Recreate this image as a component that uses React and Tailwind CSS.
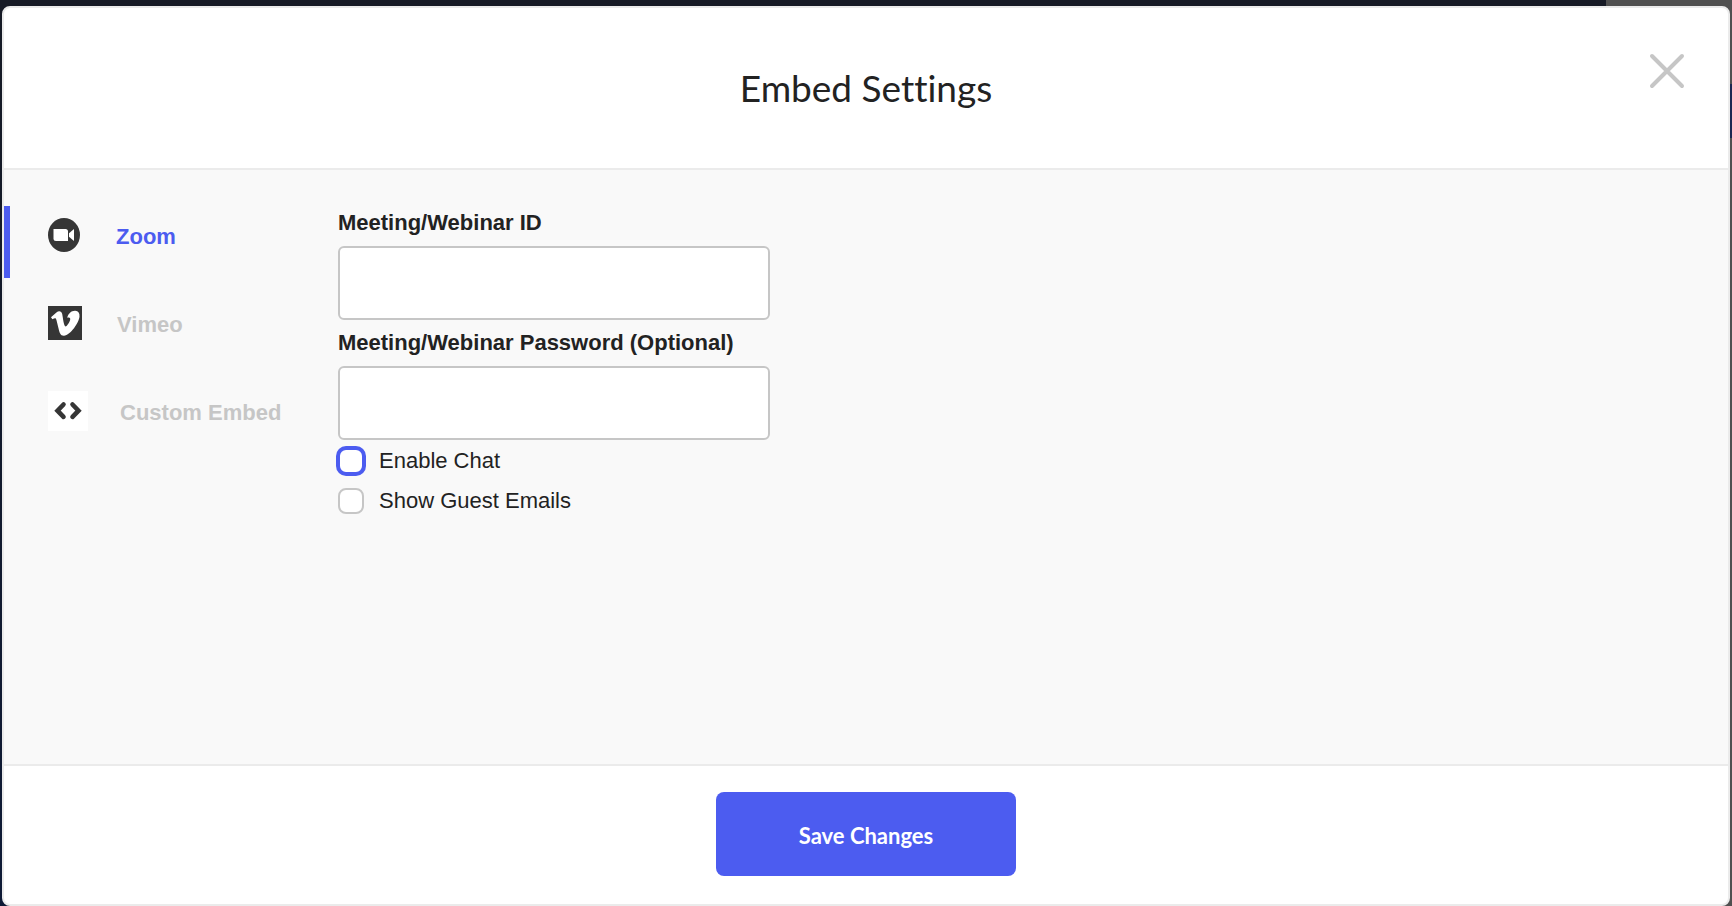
import React, { useState } from 'react';

const ZoomIcon = () => (
  <svg width="32" height="34" viewBox="0 0 32 34" aria-hidden="true">
    <ellipse cx="16" cy="17" rx="16" ry="17" fill="#363636" />
    <path d="M5.5 11H17.5Q20 11 20 13.5V23H8Q5.5 23 5.5 20.5Z" fill="#fff" />
    <path d="M21 15.2L26 11V23L21 18.8Z" fill="#fff" />
  </svg>
);

const VimeoIcon = () => (
  <svg width="34" height="34" viewBox="0 0 34 34" aria-hidden="true">
    <rect width="34" height="34" fill="#363636" />
    <path
      d="M3 11.2L8.4 6.5C10.6 4.6 13.4 4.5 14.2 8.1C15 12 15.8 20.6 17.6 20.6C19 20.6 21.9 15.8 22.2 13.6C22.5 11.6 21.2 10.9 19.2 11.8C20.4 7.4 23.4 4.6 27.3 4.8C30.4 5 31.8 7.2 31.5 10.8C31 16.2 22.6 29.4 16 29.8C12.4 30 11.4 26.2 10.6 22.8L8.5 14.2C8 11.8 7.2 11.6 4.4 13.2Z"
      fill="#fff"
    />
  </svg>
);

const CodeIcon = () => (
  <svg width="40" height="40" viewBox="0 0 40 40" aria-hidden="true">
    <rect width="40" height="40" fill="#fff" />
    <path
      d="M15.5 13.5L9.5 19.7L15.5 25.9M24.5 13.5L30.5 19.7L24.5 25.9"
      fill="none"
      stroke="#363636"
      strokeWidth="4.6"
      strokeLinecap="round"
      strokeLinejoin="miter"
    />
  </svg>
);

const tabs = [
  { id: 'zoom', label: 'Zoom', Icon: ZoomIcon, gap: 'gap-9' },
  { id: 'vimeo', label: 'Vimeo', Icon: VimeoIcon, gap: 'gap-[35px]' },
  { id: 'custom', label: 'Custom Embed', Icon: CodeIcon, gap: 'gap-8' },
];

const Field = ({ id, label, type, value, onChange }) => (
  <div>
    <label htmlFor={id} className="block whitespace-nowrap text-[22px] leading-[46px] font-bold">
      {label}
    </label>
    <input
      id={id}
      type={type}
      value={value}
      onChange={(e) => onChange(e.target.value)}
      className="block h-[74px] w-full rounded-md border-2 border-[#c6c6c6] bg-white px-4 text-[22px] outline-none"
    />
  </div>
);

const CheckRow = ({ id, label, checked, onChange, highlighted }) => (
  <div className="flex h-10 items-center gap-[15px]">
    <input
      id={id}
      type="checkbox"
      checked={checked}
      onChange={(e) => onChange(e.target.checked)}
      className={`size-[26px] shrink-0 appearance-none rounded-lg border-2 bg-white outline-none checked:bg-[#4c5cf0] ${
        highlighted ? 'border-[#4c5cf0] ring-2 ring-[#4c5cf0]' : 'border-[#c6c6c6]'
      }`}
    />
    <label htmlFor={id} className="text-[22px] leading-10">
      {label}
    </label>
  </div>
);

export default function App() {
  const [activeTab, setActiveTab] = useState('zoom');
  const [meetingId, setMeetingId] = useState('');
  const [password, setPassword] = useState('');
  const [chat, setChat] = useState(false);
  const [emails, setEmails] = useState(false);

  return (
    <div className="relative isolate flex min-h-screen flex-col bg-linear-to-b from-[#161a25] to-[#0e1a36] px-[2px] pt-[6px] font-['Liberation_Sans',Arial,sans-serif] text-[#222]">
      {/* dimmed side panel behind the dialog */}
      <div className="absolute inset-y-0 right-0 -z-10 w-[126px] bg-[#505050] pt-[84px]">
        <div className="h-[54px] bg-[#1b2752]" />
      </div>

      <div
        role="dialog"
        aria-labelledby="dialog-title"
        className="flex flex-1 flex-col overflow-hidden rounded-lg border-2 border-[#ebebeb] bg-white"
      >
        <header className="relative flex h-[162px] items-center justify-center border-b-2 border-[#ebebeb]">
          <h1
            id="dialog-title"
            className="font-['Lato',sans-serif] text-[37px] leading-10 [font-variant-ligatures:none]"
          >
            Embed Settings
          </h1>
          <button type="button" aria-label="Close" className="absolute top-[45px] right-[43px]">
            <svg width="36" height="36" viewBox="0 0 36 36" aria-hidden="true">
              <path d="M3 3L33 33M33 3L3 33" stroke="#c6c6c6" strokeWidth="4" strokeLinecap="round" />
            </svg>
          </button>
        </header>

        <main className="flex flex-1 bg-[#f9f9f9]">
          <nav className="flex w-[334px] shrink-0 flex-col gap-4 pt-9">
            {tabs.map(({ id, label, Icon, gap }) => (
              <button
                key={id}
                type="button"
                onClick={() => setActiveTab(id)}
                className={`flex h-[72px] items-center border-l-6 pb-[14px] pl-[38px] text-[22px] leading-6 font-bold whitespace-nowrap ${gap} ${
                  activeTab === id ? 'border-[#4c5cf0] text-[#4c5cf0]' : 'border-transparent text-[#c6c6c6]'
                }`}
              >
                <Icon />
                <span className="pt-1">{label}</span>
              </button>
            ))}
          </nav>

          <form className="w-[432px] pt-[30px]">
            <Field
              id="meeting-id"
              label="Meeting/Webinar ID"
              type="text"
              value={meetingId}
              onChange={setMeetingId}
            />
            <Field
              id="meeting-password"
              label="Meeting/Webinar Password (Optional)"
              type="password"
              value={password}
              onChange={setPassword}
            />
            <div className="pt-px">
              <CheckRow id="enable-chat" label="Enable Chat" checked={chat} onChange={setChat} highlighted />
              <CheckRow id="guest-emails" label="Show Guest Emails" checked={emails} onChange={setEmails} />
            </div>
          </form>
        </main>

        <footer className="flex justify-center border-t-2 border-[#ebebeb] pt-[26px] pb-7">
          <button
            type="button"
            className="h-[84px] w-[300px] rounded-lg bg-[#4c5cf0] pt-1 font-['Lato',sans-serif] text-[22px] leading-7 font-bold text-white"
          >
            Save Changes
          </button>
        </footer>
      </div>
    </div>
  );
}
